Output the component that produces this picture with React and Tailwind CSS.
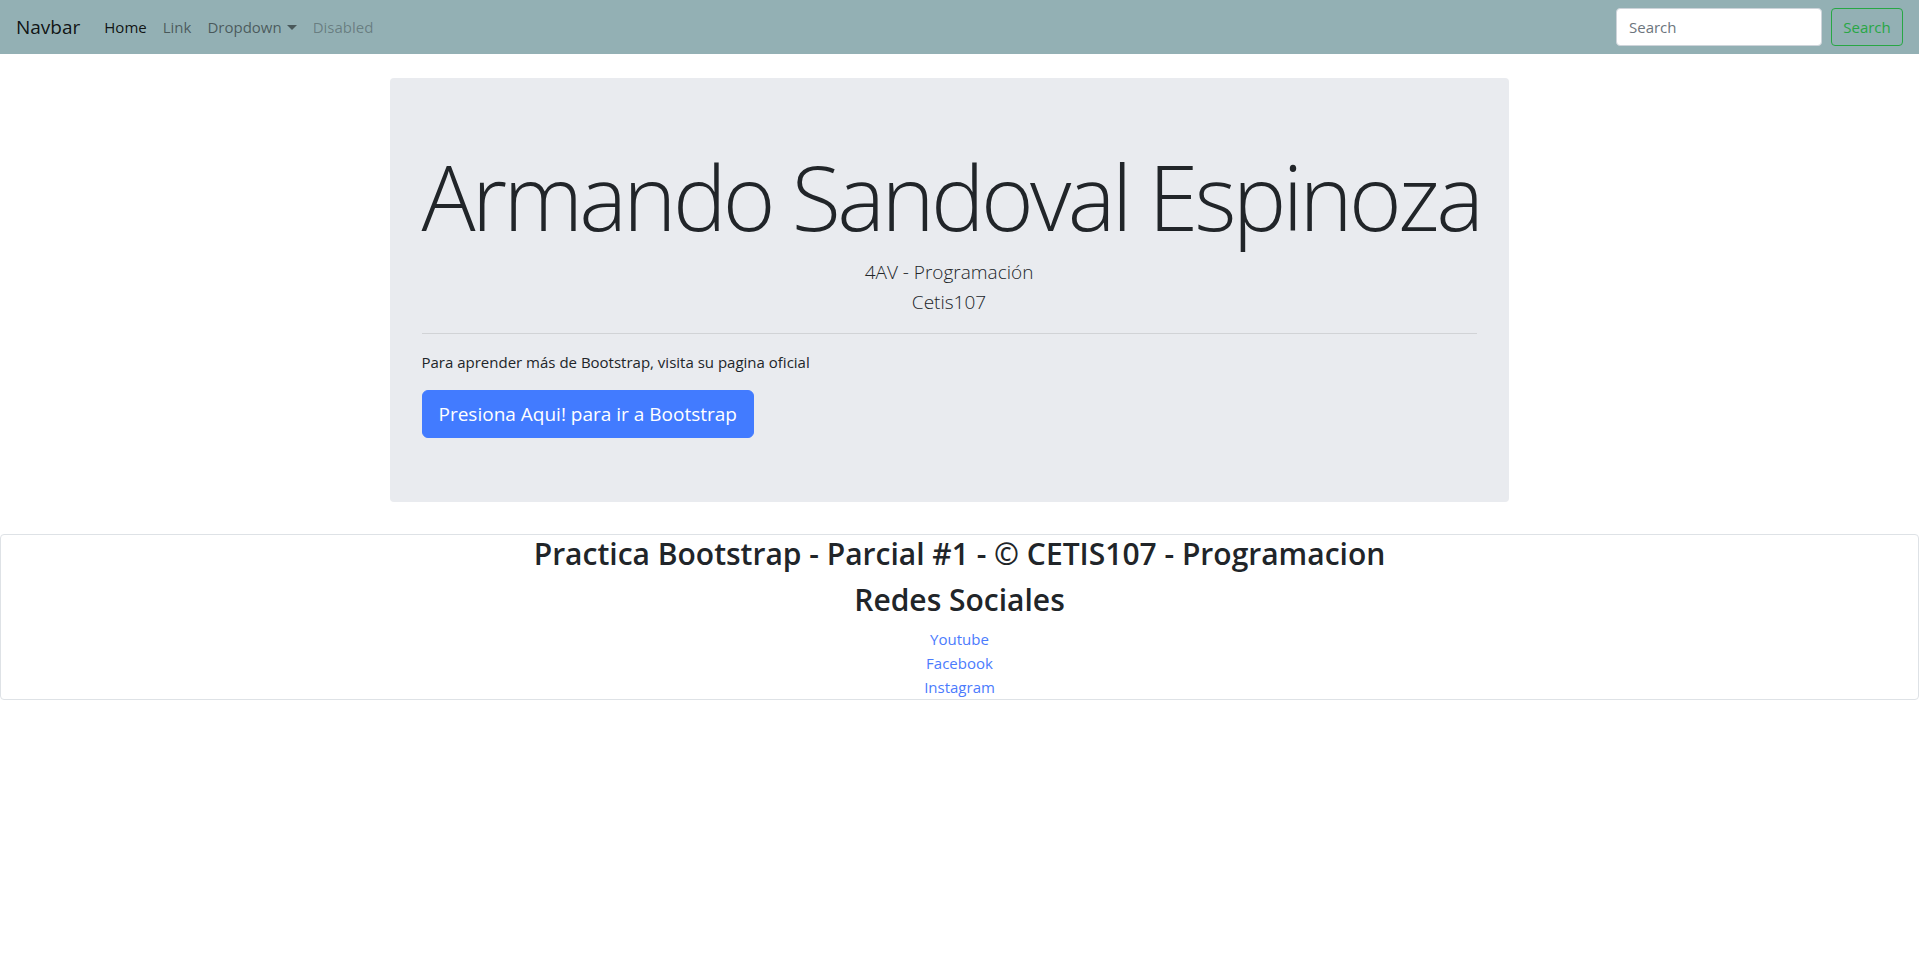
import React from 'react';

const NavLinkItem = ({ children, className = '' }) => (
  <a href="#" className={`px-2 leading-6 text-[15px] ${className}`}>{children}</a>
);

const App = () => {
  return (
    <div className="min-h-screen bg-white text-[#212529] font-['Open_Sans',sans-serif]">
      {/* navbar */}
      <nav className="h-[54px] bg-[#93b0b4] flex items-center justify-between px-4">
        <div className="flex items-center">
          <a href="#" className="text-[19px] leading-[30px] text-black/90 mr-4">Navbar</a>
          <div className="flex items-center">
            <NavLinkItem className="text-black/90">Home</NavLinkItem>
            <NavLinkItem className="text-black/50">Link</NavLinkItem>
            <NavLinkItem className="text-black/50 flex items-center">
              Dropdown
              <span className="ml-[5px] inline-block w-0 h-0 border-x-[5px] border-x-transparent border-t-[5px] border-t-black/50" />
            </NavLinkItem>
            <NavLinkItem className="text-black/30">Disabled</NavLinkItem>
          </div>
        </div>
        <form className="flex items-center" onSubmit={e => e.preventDefault()}>
          <input
            type="search"
            placeholder="Search"
            className="h-[38px] w-[206px] px-3 rounded border border-[#ced4da] bg-white text-[15px] placeholder:text-[#6c757d] outline-none mr-[9px]"
          />
          <button className="h-[38px] w-[72px] rounded border border-[#28a745] text-[#28a745] text-[15px]">Search</button>
        </form>
      </nav>

      {/* jumbotron */}
      <div className="pr-[21px] mt-6">
        <div className="w-[1119px] mx-auto bg-[#e9ebef] rounded px-8 pt-[57px] pb-16">
          <h1 className="text-[90px] leading-[122px] tracking-[-0.04em] font-light text-center whitespace-nowrap">Armando Sandoval Espinoza</h1>
          <p className="text-[19px] leading-[30px] font-light text-center">
            4AV - Programación<br />Cetis107
          </p>
          <hr className="my-4 border-t border-black/10" />
          <p className="text-[15px] leading-6 mb-4">Para aprender más de Bootstrap, visita su pagina oficial</p>
          <a href="#" className="inline-block bg-[#427bff] text-white text-[19px] leading-[30px] px-4 py-2 rounded-md border border-[#427bff]">
            Presiona Aqui! para ir a Bootstrap
          </a>
        </div>
      </div>

      {/* footer */}
      <footer className="mt-8 border border-[#dee2e6] rounded text-center">
        <h2 className="text-[30px] leading-[38px] font-semibold mb-2">Practica Bootstrap - Parcial #1 - © CETIS107 - Programacion</h2>
        <h2 className="text-[30px] leading-[38px] font-semibold mb-2">Redes Sociales</h2>
        <div className="flex flex-col items-center text-[15px] leading-6">
          <a href="#" className="text-[#4b7bfd]">Youtube</a>
          <a href="#" className="text-[#4b7bfd]">Facebook</a>
          <a href="#" className="text-[#4b7bfd]">Instagram</a>
        </div>
      </footer>
    </div>
  );
};

export default App;
